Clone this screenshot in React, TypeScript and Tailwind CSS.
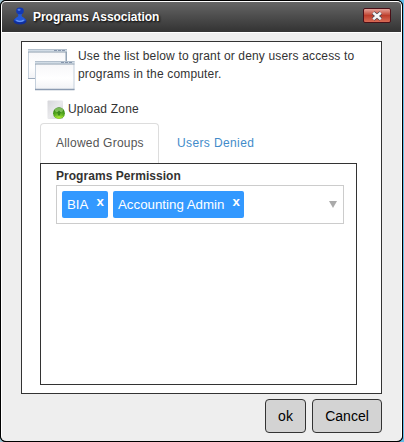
import React from "react";

function PersonIcon() {
  return (
    <svg width="14" height="18" viewBox="0 0 13 17" className="shrink-0">
      <ellipse cx="6.5" cy="13.3" rx="6.2" ry="3.3" fill="#102f9c" />
      <path d="M1 12.3C2 9.6 4.4 10 5 8L3.8 5H9.2L8 8C8.6 10 11 9.6 12 12.3C10.5 15 2.5 15 1 12.3Z" fill="#2458d8" />
      <ellipse cx="6.5" cy="3.7" rx="3.6" ry="3.2" fill="#1238b4" />
      <ellipse cx="5.6" cy="2.7" rx="1.5" ry="1" fill="#4b7ce8" />
      <path d="M3 12.5C5 13.8 8 13.8 10 12.4" stroke="#6b98f5" strokeWidth="1.2" fill="none" />
    </svg>
  );
}

function WindowsIcon() {
  return (
    <svg width="48" height="43" viewBox="0 0 48 43" className="block">
      <defs>
        <linearGradient id="bar" x1="0" y1="0" x2="0" y2="1">
          <stop offset="0" stopColor="#a3b1bf" />
          <stop offset="0.5" stopColor="#d9e3ec" />
          <stop offset="1" stopColor="#8d9dac" />
        </linearGradient>
        <linearGradient id="pane" x1="0" y1="0" x2="0" y2="1">
          <stop offset="0" stopColor="#f5f5f7" />
          <stop offset="0.6" stopColor="#ffffff" />
          <stop offset="1" stopColor="#f1f2f5" />
        </linearGradient>
      </defs>
      <rect x="0.5" y="1.5" width="38" height="29" fill="url(#pane)" stroke="#c5d0dc" />
      <rect x="0" y="1" width="39" height="3.5" fill="url(#bar)" />
      <path d="M26 2.5h3M30 2.5h3M34 2.5h3" stroke="#8796ad" />
      <path d="M38.2 4v9" stroke="#8fa0b2" strokeWidth="1.4" />
      <path d="M0 30.5h8" stroke="#9cabbd" strokeWidth="1.2" />
      <rect x="7.5" y="13.5" width="38.5" height="28" fill="url(#pane)" stroke="#c5d0dc" />
      <rect x="7" y="13" width="39.5" height="3.5" fill="url(#bar)" />
      <path d="M33 14.5h3M37 14.5h3M41 14.5h3" stroke="#8796ad" />
      <path d="M7 41.5h39.5" stroke="#8b9bb1" strokeWidth="1.3" />
    </svg>
  );
}

function UploadIcon() {
  return (
    <svg width="19" height="20" viewBox="0 0 19 20" className="block">
      <defs>
        <linearGradient id="sheet" x1="0" y1="0" x2="1" y2="1">
          <stop offset="0" stopColor="#d6d6da" />
          <stop offset="0.5" stopColor="#e9e9ec" />
          <stop offset="1" stopColor="#cfcfd4" />
        </linearGradient>
        <radialGradient id="orb" cx="0.5" cy="0.8" r="0.75">
          <stop offset="0" stopColor="#a5e23c" />
          <stop offset="0.55" stopColor="#55a91e" />
          <stop offset="1" stopColor="#2f8012" />
        </radialGradient>
      </defs>
      <rect x="0.5" y="0.5" width="15.5" height="18.5" rx="1" fill="url(#sheet)" />
      <circle cx="12" cy="13.2" r="5.9" fill="url(#orb)" />
      <ellipse cx="12" cy="10" rx="4.2" ry="2.3" fill="#a9d884" opacity="0.6" />
      <path d="M12 10.5L14.8 13.3H13.2V15.6H10.8V13.3H9.2Z" fill="#3b8a1c" />
      <path d="M8 15.8C9.5 18.4 14.5 18.4 16 15.8" stroke="#a6e52c" fill="none" />
    </svg>
  );
}

function CloseButton() {
  return (
    <button className="mt-[6px] mr-[10px] flex h-[15px] w-[28px] items-center justify-center rounded-[2px] border border-[#4a1018] bg-linear-to-b from-[#e5a29a] via-[#bd3e2c] via-50% to-[#d86a55]">
      <svg width="12" height="10" viewBox="0 0 12 10">
        <path d="M2.2 1.7L9.8 8.3M9.8 1.7L2.2 8.3" stroke="#4c4650" strokeWidth="4" />
        <path d="M2.2 1.7L9.8 8.3M9.8 1.7L2.2 8.3" stroke="#f5f5f5" strokeWidth="2.5" />
      </svg>
    </button>
  );
}

function Tag({ label, className }: { label: string; className: string }) {
  return (
    <span className={`flex h-[27px] rounded-[2px] bg-[#3399ff] pl-[5px] text-white ${className}`}>
      <span className="pt-[5px] text-[13.3px] leading-[18px]">{label}</span>
      <b className="ml-auto pt-[3px] pr-[4px] text-[13.3px] leading-[16px] font-bold">x</b>
    </span>
  );
}

export default function App() {
  return (
    <div className="h-[442px] w-[404px] overflow-hidden bg-linear-to-r from-[#9fc5d2] from-50% to-[#62bde8] font-['Liberation_Sans',Arial,sans-serif] whitespace-nowrap text-[#333]">
      <div className="h-[442px] w-[403px] rounded-[5px] border border-black bg-black">
        <div className="h-[440px] w-[401px] overflow-hidden rounded-[5px] border border-b-0 border-white bg-[#eeeeee]">
          <header className="flex h-[31px] items-start border-b border-white bg-linear-to-b from-[#666] to-[#333] pl-[11px]">
            <div className="mt-[5px]"><PersonIcon /></div>
            <h1 className="mt-[7px] ml-[6px] text-[12px] leading-[16px] font-bold tracking-[-0.03px] text-white [text-shadow:1px_1px_2px_#000]">Programs Association</h1>
            <div className="ml-auto"><CloseButton /></div>
          </header>

          <main className="mt-[8px] ml-[19px] h-[353px] w-[361px] border border-[#333] bg-white">
            <div className="flex pt-[6px] pl-[6px]">
              <WindowsIcon />
              <p className="-mt-px ml-[2px] text-[12px] leading-[18px] tracking-[0.16px]">
                Use the list below to grant or deny users access to<br />programs in the computer.
              </p>
            </div>
            <div className="flex h-[32px] pt-[9px] pl-[25px]">
              <UploadIcon />
              <span className="ml-[2px] text-[12px] leading-[18px] tracking-[0.2px]">Upload Zone</span>
            </div>
            <nav className="ml-[18px] flex h-[40px] text-[12px] leading-[18px]">
              <div className="h-[40px] w-[119px] rounded-t-[4px] border border-b-0 border-[#ddd] pt-[10px] pl-[15px] tracking-[0.22px] text-[#555]">Allowed Groups</div>
              <div className="pt-[11px] pl-[18px] tracking-[0.38px] text-[#428bca]">Users Denied</div>
            </nav>
            <section className="ml-[18px] h-[222px] w-[317px] border border-[#333] pt-[3px] pl-[15px]">
              <h2 className="h-[18px] text-[12px] leading-[18px] font-bold tracking-[0.04px]">Programs Permission</h2>
              <div className="flex h-[39px] w-[288px] gap-[5px] border border-[#ccc] pt-[5px] pl-[5px]">
                <Tag label="BIA" className="w-[46px]" />
                <Tag label="Accounting Admin" className="w-[131px]" />
                <svg width="8" height="7" viewBox="0 0 8 7" className="mt-[10px] mr-[6px] ml-auto">
                  <path d="M0 0H8L4 7Z" fill="#aaa" />
                </svg>
              </div>
            </section>
          </main>

          <footer className="mt-[5px] mr-[19px] flex justify-end gap-[6px] text-[14px] text-black">
            <button className="h-[34px] w-[41px] rounded-[4px] border border-[#333] bg-[#d3d3d3]">ok</button>
            <button className="h-[34px] w-[70px] rounded-[4px] border border-[#333] bg-[#d3d3d3]">Cancel</button>
          </footer>
        </div>
      </div>
    </div>
  );
}
